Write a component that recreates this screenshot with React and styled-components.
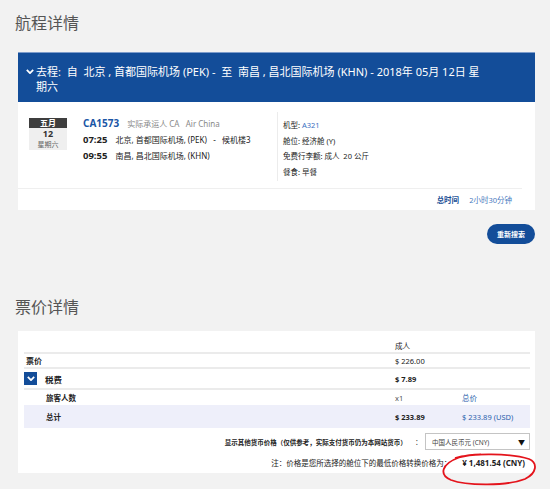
import React from 'react';
import styled, { createGlobalStyle } from 'styled-components';

const GlobalStyle = createGlobalStyle`
  body {
    margin: 0;
    background: #f2f2f2;
    font-family: "Noto Sans", "Noto Sans CJK SC", sans-serif;
    color: #333;
  }
`;

const BLUE = '#134d99';

function Chevron({ size = 8 }) {
    return (
        <svg width={size} height={size * 0.7} viewBox="0 0 10 7">
            <path d="M1 1.2 L5 5.2 L9 1.2" fill="none" stroke="#fff" strokeWidth="2.2"/>
        </svg>
    );
}

function App() {
    return (
        <StyledPage>
            <GlobalStyle/>
            <StyledTitle $after={18}>航程详情</StyledTitle>
            <StyledCard>
                <StyledTripHeader>
                    <span className='icon'><Chevron/></span>
                    <span>
                        去程:&nbsp; 自&nbsp; 北京 , 首都国际机场 (PEK) -&nbsp; 至&nbsp; 南昌 , 昌北国际机场 (KHN) - 2018年 05月 12日 星期六
                    </span>
                </StyledTripHeader>
                <StyledBodyRow>
                    <StyledLeftCol>
                        <StyledDateBox>
                            <div className='month'>五月</div>
                            <div className='day'>12</div>
                            <div className='week'>星期六</div>
                        </StyledDateBox>
                        <StyledFlight>
                            <StyledFlightLine>
                                <span className='code'>CA1573</span>
                                <span className='carrier'>实际承运人 CA&nbsp;&nbsp; Air China</span>
                            </StyledFlightLine>
                            <StyledFlightLine>
                                <span className='time'>07:25</span>
                                <span className='place'>北京, 首都国际机场, (PEK)&nbsp;&nbsp; -&nbsp;&nbsp; 候机楼3</span>
                            </StyledFlightLine>
                            <StyledFlightLine>
                                <span className='time'>09:55</span>
                                <span className='place'>南昌, 昌北国际机场, (KHN)</span>
                            </StyledFlightLine>
                        </StyledFlight>
                    </StyledLeftCol>
                    <StyledRightCol>
                        <div>机型: <span className='link'>A321</span></div>
                        <div>舱位: 经济舱 (Y)</div>
                        <div>免费行李额: 成人&nbsp; 20 公斤</div>
                        <div>餐食: 早餐</div>
                    </StyledRightCol>
                </StyledBodyRow>
                <StyledTripFooter>
                    <b>总时间</b>
                    <span>2小时30分钟</span>
                </StyledTripFooter>
            </StyledCard>
            <StyledButtonRow>
                <StyledButton>重新搜索</StyledButton>
            </StyledButtonRow>

            <StyledTitle $before={40} $after={13}>票价详情</StyledTitle>
            <StyledFareCard>
                <StyledFareRow $height={14} $line>
                    <span/>
                    <span>成人</span>
                    <span/>
                </StyledFareRow>
                <StyledFareRow $height={13} $line>
                    <span className='label'>票价</span>
                    <span>$ 226.00</span>
                    <span/>
                </StyledFareRow>
                <StyledFareRow $height={19} $line>
                    <span className='label tax'>
                        <StyledToggle><Chevron size={8}/></StyledToggle>
                        税费
                    </span>
                    <b>$ 7.89</b>
                    <span/>
                </StyledFareRow>
                <StyledFareRow $height={15}>
                    <span className='label indent'>旅客人数</span>
                    <span className='muted'>x1</span>
                    <span className='blue'>总价</span>
                </StyledFareRow>
                <StyledFareRow $height={23} $shaded>
                    <span className='label indent'>总计</span>
                    <b>$ 233.89</b>
                    <span className='blue'>$ 233.89 (USD)</span>
                </StyledFareRow>
                <StyledCurrencyRow>
                    <span className='label'>显示其他货币价格（仅供参考，实际支付货币仍为本网站货币）</span>
                    <span className='colon'>:</span>
                    <StyledSelect>
                        <span>中国人民币元 (CNY)</span>
                        <span className='arrow'>▼</span>
                    </StyledSelect>
                </StyledCurrencyRow>
                <StyledNoteRow>
                    <span>注：价格是您所选择的舱位下的最低价格转换价格为：</span>
                    <b>¥ 1,481.54 (CNY)</b>
                </StyledNoteRow>
                <StyledCircle viewBox="0 0 96 33">
                    <path
                        d="M14 5 C30 0 70 0 88 6 C97 10 96 20 84 26 C66 33 26 33 10 27 C-2 22 0 11 18 4.5 C26 2 34 1.5 40 1.5"
                        fill="none" stroke="#e4141c" strokeWidth="1.8"/>
                </StyledCircle>
            </StyledFareCard>
        </StyledPage>
    );
}

const StyledPage = styled.div`
  padding: 0 15px 16px 18px;
`

const StyledTitle = styled.h2`
  margin: ${p => p.$before || 0}px 0 ${p => p.$after || 0}px -3px;
  padding-top: 12px;
  font-size: 16px;
  line-height: 22px;
  font-weight: 400;
  color: #555;
`

const StyledCard = styled.div`
  background: #fff;
`

const StyledTripHeader = styled.div`
  display: flex;
  align-items: flex-start;
  gap: 2px;
  box-sizing: border-box;
  height: 50px;
  padding: 11px 48px 0 8px;
  background: ${BLUE};
  border-top: 1px solid #7d9ccb;
  color: #fff;
  font-size: 11px;
  line-height: 15px;
  .icon{
    display: flex;
    align-items: center;
    height: 15px;
  }
`

const StyledBodyRow = styled.div`
  display: flex;
  box-sizing: border-box;
  height: 86px;
  padding: 10px 0 0 11px;
`

const StyledLeftCol = styled.div`
  display: flex;
  align-items: flex-start;
  width: 248px;
  padding-top: 6px;
`

const StyledDateBox = styled.div`
  display: flex;
  flex-direction: column;
  width: 38px;
  height: 32px;
  background: #efefef;
  text-align: center;
  overflow: hidden;
  .month{
    height: 10px;
    line-height: 10px;
    background: #3e3e3e;
    color: #fff;
    font-size: 8px;
    font-weight: 700;
  }
  .day{
    height: 12px;
    line-height: 12px;
    font-size: 9px;
    font-weight: 700;
    color: #333;
  }
  .week{
    height: 10px;
    line-height: 9px;
    font-size: 7px;
    color: #666;
  }
`

const StyledFlight = styled.div`
  margin: -3px 0 0 16px;
`

const StyledFlightLine = styled.div`
  display: flex;
  align-items: baseline;
  gap: 8px;
  height: 16.5px;
  line-height: 16px;
  white-space: nowrap;
  .code{
    font-size: 10px;
    font-weight: 700;
    color: #1a56a6;
  }
  .carrier{
    font-size: 8px;
    color: #888;
  }
  .time{
    font-size: 9.5px;
    font-weight: 700;
    color: #222;
  }
  .place{
    font-size: 8px;
    color: #222;
  }
`

const StyledRightCol = styled.div`
  align-self: flex-start;
  border-left: 1px solid #ececec;
  padding: 6px 0 1px 5px;
  font-size: 7.5px;
  line-height: 15.5px;
  color: #222;
  .link{
    color: #3b6fbf;
  }
`

const StyledTripFooter = styled.div`
  display: flex;
  justify-content: flex-end;
  align-items: center;
  gap: 10px;
  height: 21px;
  margin-right: 13px;
  padding-right: 10px;
  border-top: 1px solid #efefef;
  font-size: 7.5px;
  color: #4a7bc0;
  b{
    color: #1a4f96;
  }
`

const StyledButtonRow = styled.div`
  display: flex;
  justify-content: flex-end;
  margin-top: 14px;
`

const StyledButton = styled.button`
  width: 48px;
  height: 20px;
  padding: 0;
  border: none;
  border-radius: 10px;
  background: ${BLUE};
  color: #fff;
  font-family: inherit;
  font-size: 7px;
  font-weight: 700;
`

const StyledFareCard = styled.div`
  position: relative;
  background: #fff;
  padding: 7px 5px 5px 6px;
`

const StyledFareRow = styled.div`
  display: grid;
  grid-template-columns: 371px 67px 68px;
  align-items: center;
  height: ${p => p.$height}px;
  border-bottom: ${p => p.$line ? '2px solid #ebebeb' : 'none'};
  background: ${p => p.$shaded ? '#eeeffa' : 'transparent'};
  font-size: 7.5px;
  color: #222;
  b{
    color: #222;
  }
  .label{
    padding-left: 2px;
    font-size: 8px;
    font-weight: 700;
    color: #222;
  }
  .tax{
    display: flex;
    align-items: center;
    gap: 8px;
    padding-left: 0;
    font-size: 8.5px;
  }
  .indent{
    padding-left: 22px;
    font-size: 7.5px;
  }
  .muted{
    color: #555;
  }
  .blue{
    color: #2c5fad;
  }
`

const StyledToggle = styled.span`
  display: flex;
  align-items: center;
  justify-content: center;
  width: 13px;
  height: 13px;
  background: ${BLUE};
`

const StyledCurrencyRow = styled.div`
  display: flex;
  justify-content: flex-end;
  align-items: center;
  margin-top: 5px;
  font-size: 6.5px;
  color: #222;
  .label{
    font-weight: 700;
  }
  .colon{
    margin: 0 7px 0 9px;
    font-size: 8px;
  }
`

const StyledSelect = styled.div`
  display: flex;
  justify-content: space-between;
  align-items: center;
  box-sizing: border-box;
  width: 105px;
  height: 17px;
  padding: 0 4px 0 6px;
  border: 1px solid #c4c4c4;
  background: #fff;
  font-size: 6.5px;
  color: #444;
  .arrow{
    font-size: 7px;
    color: #111;
  }
`

const StyledNoteRow = styled.div`
  display: flex;
  justify-content: flex-end;
  align-items: center;
  gap: 11px;
  height: 12px;
  margin-top: 6px;
  padding-right: 5px;
  font-size: 7.5px;
  color: #222;
  b{
    font-size: 8px;
    color: #222;
  }
`

const StyledCircle = styled.svg`
  position: absolute;
  left: 423px;
  top: 122px;
  width: 96px;
  height: 33px;
  overflow: visible;
`

export default App;
